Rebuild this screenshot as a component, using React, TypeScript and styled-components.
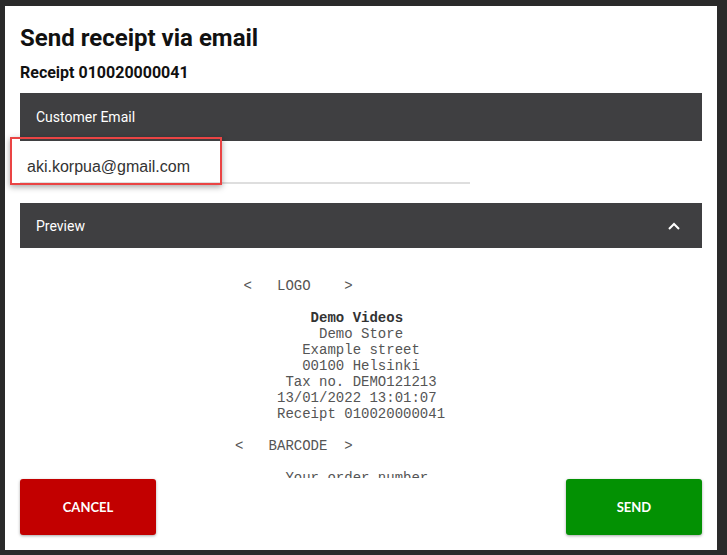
import styled, { createGlobalStyle } from "styled-components";

const GlobalStyle = createGlobalStyle`
    html, body {
        margin: 0;
        padding: 0;
        background: #2a2a2a;
    }

    #root {
        padding: 6px 10px 5px 5px;
    }
`;

const Dialog = styled.div`
    position: relative;
    box-sizing: border-box;
    width: 712px;
    height: 544px;
    padding: 18px 15px 15px;
    background: #fff;
    display: flex;
    flex-direction: column;
    font-family: Roboto, "Liberation Sans", sans-serif;
    color: #111;
`;

const Title = styled.h2`
    margin: 0;
    font-size: 24px;
    line-height: 28px;
    font-weight: 700;
`;

const SubTitle = styled.div`
    margin-top: 12px;
    font-size: 16px;
    line-height: 18px;
    font-weight: 700;
`;

const ScrollArea = styled.div`
    margin-top: 11px;
    height: 385px;
    overflow-y: auto;

    &::-webkit-scrollbar {
        width: 2px;
    }

    &::-webkit-scrollbar-track {
        background: #c4c4c4;
    }

    &::-webkit-scrollbar-thumb {
        background: #3f3f41;
    }
`;

const SectionHeader = styled.div<{ $height: number }>`
    display: flex;
    align-items: center;
    justify-content: space-between;
    height: ${p => p.$height}px;
    padding: 0 22px 0 16px;
    background: #3f3f41;
    color: #fff;
    font-size: 14px;
    font-weight: 400;
`;

const EmailRow = styled.div`
    padding: 7px 0 19px;
`;

const EmailInput = styled.input`
    box-sizing: border-box;
    width: 66%;
    height: 36px;
    padding: 4px 7px 0;
    border: none;
    border-bottom: 2px solid #dedede;
    outline: none;
    font-family: "Liberation Sans", Arial, sans-serif;
    font-size: 16px;
    color: #333;
    background: transparent;
`;

const Highlight = styled.div`
    position: absolute;
    left: 5px;
    top: 131px;
    width: 212px;
    height: 48px;
    box-sizing: border-box;
    border: 2px solid #ea4444;
    box-shadow: 0 2px 6px rgba(0, 0, 0, 0.35);
    pointer-events: none;
`;

const ReceiptText = styled.pre`
    margin: 0;
    padding: 30px 0 278px;
    display: flex;
    justify-content: center;
    font-family: "Liberation Mono", "Courier New", monospace;
    font-size: 14px;
    line-height: 16px;
    color: #555;

    b {
        font-weight: 700;
        color: #333;
    }
`;

const ReceiptBlock = styled.div`
    width: 336px;
    white-space: pre;
`;

const ButtonRow = styled.div`
    margin-top: 1px;
    display: flex;
    justify-content: space-between;
`;

const ActionButton = styled.button<{ $color: string }>`
    width: 136px;
    height: 56px;
    border: none;
    border-radius: 3px;
    background: ${p => p.$color};
    color: #fff;
    font-family: Lato, "Open Sans", sans-serif;
    font-weight: 700;
    font-size: 13px;
    box-shadow: 0 1px 3px rgba(0, 0, 0, 0.35);
    cursor: pointer;
`;

const receiptLines: (string | { bold: string })[] = [
    "      <   LOGO    >",
    "",
    { bold: "              Demo Videos" },
    "               Demo Store",
    "             Example street",
    "             00100 Helsinki",
    "           Tax no. DEMO121213",
    "          13/01/2022 13:01:07",
    "          Receipt 010020000041",
    "",
    "     <   BARCODE  >",
    "",
    "           Your order number",
];

const ChevronUp = () => (
    <svg width="12" height="8" viewBox="0 0 12 8">
        <path d="M1 7 L6 2 L11 7" fill="none" stroke="#fff" strokeWidth="2" />
    </svg>
);

export default function App() {
    return (
        <>
            <GlobalStyle />
            <Dialog>
                <Title>Send receipt via email</Title>
                <SubTitle>Receipt 010020000041</SubTitle>
                <ScrollArea>
                    <SectionHeader $height={48}>Customer Email</SectionHeader>
                    <EmailRow>
                        <EmailInput type="email" defaultValue="aki.korpua@gmail.com" />
                    </EmailRow>
                    <SectionHeader $height={45}>
                        Preview
                        <ChevronUp />
                    </SectionHeader>
                    <ReceiptText>
                        <ReceiptBlock>
                            {receiptLines.map((line, index) => (
                                <div key={`line-${index}`}>
                                    {typeof line === "string"
                                        ? (line || " ")
                                        : <b>{line.bold}</b>}
                                </div>
                            ))}
                        </ReceiptBlock>
                    </ReceiptText>
                </ScrollArea>
                <ButtonRow>
                    <ActionButton $color="#c20000">CANCEL</ActionButton>
                    <ActionButton $color="#039103">SEND</ActionButton>
                </ButtonRow>
                <Highlight />
            </Dialog>
        </>
    );
}
